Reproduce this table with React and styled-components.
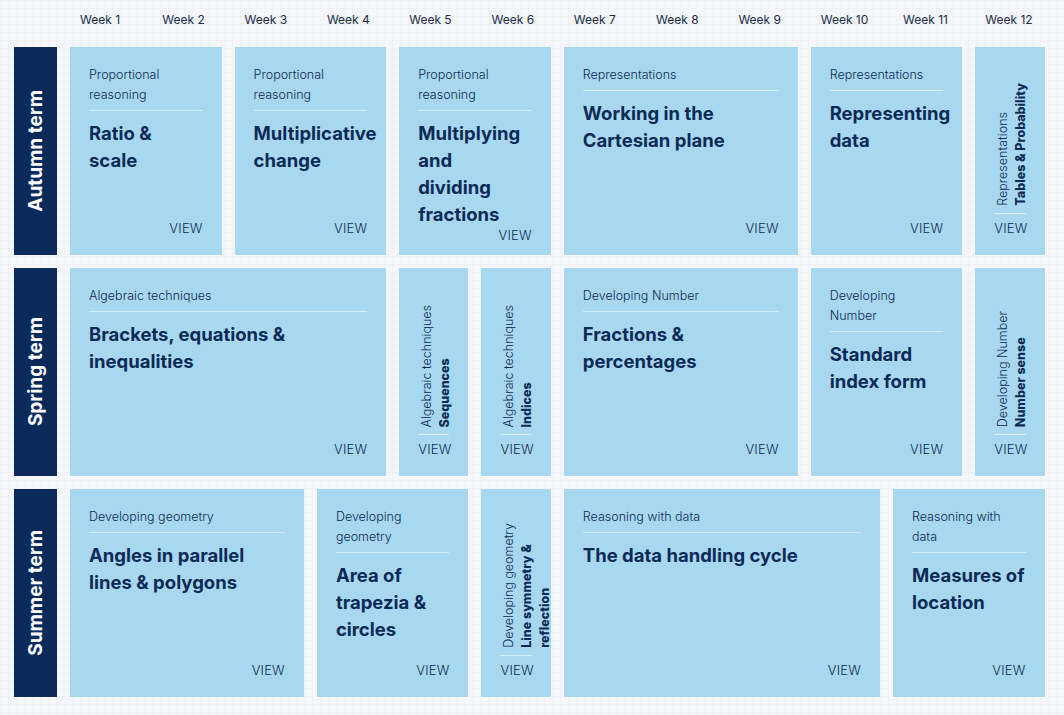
import styled, { createGlobalStyle } from "styled-components";

const GlobalStyle = createGlobalStyle`
  body {
    margin: 0;
    background-color: #f4f6f9;
    background-image:
      linear-gradient(rgba(120, 140, 170, 0.035) 1px, transparent 1px),
      linear-gradient(90deg, rgba(120, 140, 170, 0.035) 1px, transparent 1px);
    background-size: 8px 8px;
    font-family: Inter, "Liberation Sans", sans-serif;
    color: #0c2a57;
  }
`;

const Board = styled.div`
  display: grid;
  grid-template-columns: 43px repeat(12, 69.3px);
  grid-template-rows: 34px repeat(3, 208px);
  column-gap: 13px;
  row-gap: 13px;
  padding-left: 14px;
  width: 1064px;
  height: 715px;
  box-sizing: border-box;
`;

const WeekLabel = styled.div`
  grid-row: 1;
  grid-column: ${({ $col }) => $col + 1};
  padding: 13px 0 0 10px;
  font-size: 12px;
  line-height: 14px;
  color: #1b2d4a;
  white-space: nowrap;
`;

const TermLabel = styled.div`
  grid-row: ${({ $row }) => $row + 1};
  grid-column: 1;
  background: #0b2a5c;
  color: #ffffff;
  display: flex;
  align-items: center;
  justify-content: center;
`;

const TermText = styled.span`
  writing-mode: vertical-rl;
  transform: rotate(180deg);
  font-size: 19px;
  font-weight: 700;
  white-space: nowrap;
`;

const Card = styled.div`
  grid-row: ${({ $row }) => $row + 1};
  grid-column: ${({ $start }) => $start + 1} / span ${({ $span }) => $span};
  background: #a8d8ef;
  box-shadow: 0 1px 0 rgba(255, 255, 255, 0.7);
  display: flex;
  flex-direction: column;
  padding: 18px 19px 20px 19px;
  box-sizing: border-box;
  min-width: 0;
`;

const Strand = styled.div`
  font-size: 12.5px;
  font-weight: 300;
  line-height: 20px;
  padding-bottom: 5px;
  border-bottom: 1px solid rgba(255, 255, 255, 0.5);
  white-space: pre;
`;

const Title = styled.div`
  margin-top: 9px;
  font-size: 18.5px;
  font-weight: 700;
  line-height: 27px;
  white-space: pre;
`;

const View = styled.div`
  margin-top: auto;
  align-self: flex-end;
  font-size: 13px;
  font-weight: 300;
  line-height: 14px;
  letter-spacing: 0.2px;
`;

const SideBlock = styled.div`
  margin-top: auto;
  align-self: flex-start;
  writing-mode: vertical-rl;
  transform: rotate(180deg);
  max-height: 132px;
  line-height: 18px;
  padding-top: 7px;
`;

const SideStrand = styled.div`
  font-size: 12.5px;
  font-weight: 300;
  white-space: nowrap;
`;

const SideTitle = styled.div`
  font-size: 12.5px;
  font-weight: 800;
  white-space: pre;
`;

const SideFoot = styled.div`
  border-top: 1px solid rgba(255, 255, 255, 0.5);
  padding-top: 7px;
  display: flex;
  justify-content: flex-start;
  font-size: 13px;
  font-weight: 300;
  line-height: 14px;
  letter-spacing: 0.2px;
`;

const terms = ["Autumn term", "Spring term", "Summer term"];

const units = [
  // autumn
  { row: 1, start: 1, span: 2, strand: "Proportional\nreasoning", title: "Ratio &\nscale" },
  { row: 1, start: 3, span: 2, strand: "Proportional\nreasoning", title: "Multiplicative\nchange" },
  { row: 1, start: 5, span: 2, strand: "Proportional\nreasoning", title: "Multiplying\nand\ndividing\nfractions" },
  { row: 1, start: 7, span: 3, strand: "Representations", title: "Working in the\nCartesian plane" },
  { row: 1, start: 10, span: 2, strand: "Representations", title: "Representing\ndata" },
  { row: 1, start: 12, span: 1, strand: "Representations", title: "Tables & Probability" },
  // spring
  { row: 2, start: 1, span: 4, strand: "Algebraic techniques", title: "Brackets, equations &\ninequalities" },
  { row: 2, start: 5, span: 1, strand: "Algebraic techniques", title: "Sequences" },
  { row: 2, start: 6, span: 1, strand: "Algebraic techniques", title: "Indices" },
  { row: 2, start: 7, span: 3, strand: "Developing Number", title: "Fractions &\npercentages" },
  { row: 2, start: 10, span: 2, strand: "Developing\nNumber", title: "Standard\nindex form" },
  { row: 2, start: 12, span: 1, strand: "Developing Number", title: "Number sense" },
  // summer
  { row: 3, start: 1, span: 3, strand: "Developing geometry", title: "Angles in parallel\nlines & polygons" },
  { row: 3, start: 4, span: 2, strand: "Developing\ngeometry", title: "Area of\ntrapezia &\ncircles" },
  { row: 3, start: 6, span: 1, strand: "Developing geometry", title: "Line symmetry &\nreflection" },
  { row: 3, start: 7, span: 4, strand: "Reasoning with data", title: "The data handling cycle" },
  { row: 3, start: 11, span: 2, strand: "Reasoning with\ndata", title: "Measures of\nlocation" },
];

export default function App() {
  return (
    <>
      <GlobalStyle />
      <Board>
        {Array.from({ length: 12 }, (_, i) => (
          <WeekLabel key={i} $col={i + 1}>
            Week {i + 1}
          </WeekLabel>
        ))}
        {terms.map((t, i) => (
          <TermLabel key={t} $row={i + 1}>
            <TermText>{t}</TermText>
          </TermLabel>
        ))}
        {units.map((u) =>
          u.span === 1 ? (
            <Card key={u.title} $row={u.row} $start={u.start} $span={1}>
              <SideBlock>
                <SideStrand>{u.strand}</SideStrand>
                <SideTitle>{u.title}</SideTitle>
              </SideBlock>
              <SideFoot>VIEW</SideFoot>
            </Card>
          ) : (
            <Card key={u.title} $row={u.row} $start={u.start} $span={u.span}>
              <Strand>{u.strand}</Strand>
              <Title>{u.title}</Title>
              <View>VIEW</View>
            </Card>
          )
        )}
      </Board>
    </>
  );
}
